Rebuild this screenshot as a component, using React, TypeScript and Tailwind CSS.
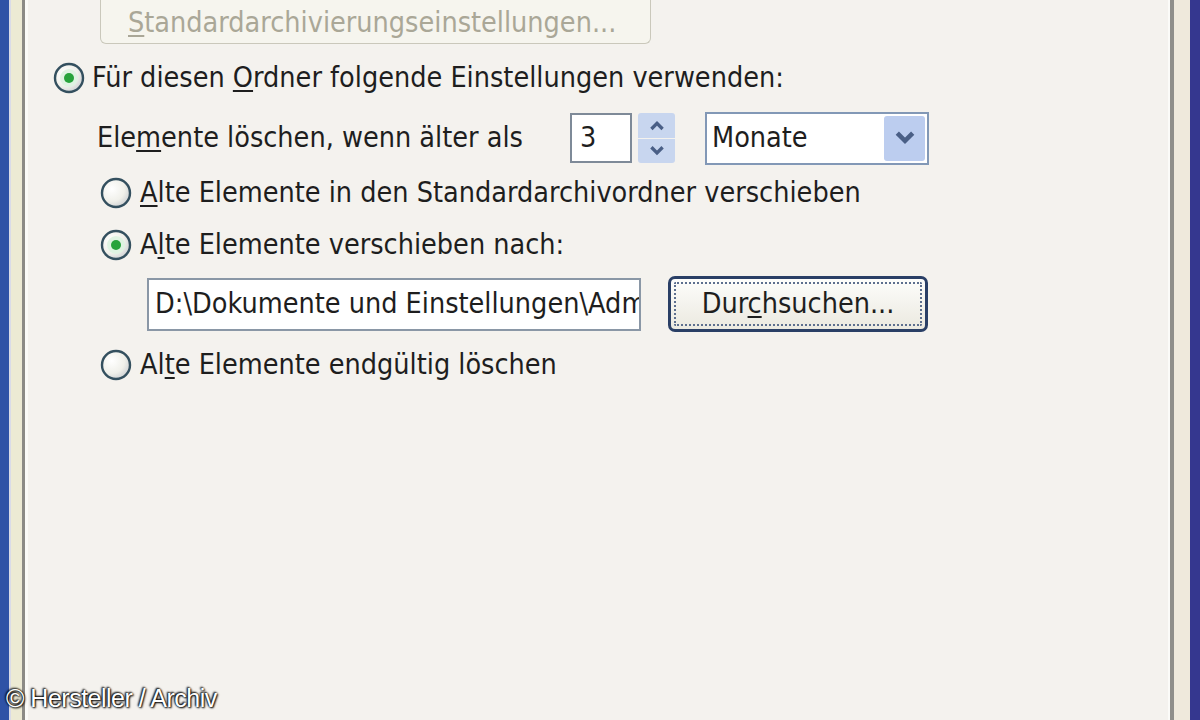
import React from 'react';

const font = "font-['DejaVu_Sans',sans-serif] font-stretch-condensed";

const Radio: React.FC<{ checked?: boolean }> = ({ checked }) => (
  <svg width="32" height="32" viewBox="0 0 32 32" className="shrink-0">
    <defs>
      <radialGradient id={checked ? 'rg1' : 'rg0'} cx="0.35" cy="0.35" r="0.75">
        <stop offset="0" stopColor="#ffffff" />
        <stop offset="0.6" stopColor="#f0f0ea" />
        <stop offset="1" stopColor="#c9ccd0" />
      </radialGradient>
    </defs>
    <circle cx="16" cy="16" r="14" fill={`url(#${checked ? 'rg1' : 'rg0'})`} stroke="#34505f" strokeWidth="2.4" />
    {checked && (
      <>
        <circle cx="16" cy="16" r="9" fill="#dff3e2" />
        <circle cx="16" cy="16" r="5" fill="#27a33b" />
      </>
    )}
  </svg>
);

const Chevron: React.FC<{ up?: boolean; size?: number }> = ({ up, size = 16 }) => (
  <svg width={size} height={size * 0.7} viewBox="0 0 14 10">
    <polyline
      points={up ? '2,8 7,3 12,8' : '2,2 7,7 12,2'}
      fill="none"
      stroke="#4a5f86"
      strokeWidth="3"
      strokeLinejoin="miter"
    />
  </svg>
);

const App: React.FC = () => {
  return (
    <div className={`w-[1200px] h-[720px] flex overflow-hidden bg-[#f4f2ee] text-[#1e1e1e] ${font}`}>
      {/* left window frame */}
      <div className="w-[9px] bg-[#2f52a6]" />
      <div className="w-[2px] bg-[#d9dbe8]" />
      <div className="w-[11px] bg-[#ecead4]" />
      <div className="w-[3px] bg-[#8c8b86]" />
      <div className="w-[3px] bg-[#fbfbf8]" />

      <main className="relative flex-1 flex flex-col pl-[25px] text-[28.5px]">
        {/* disabled button cut at top */}
        <div className="ml-[47px] w-[551px] h-[44px] rounded-b-[6px] border border-t-0 border-[#cac8bb] bg-[#f6f5ee] flex items-end pb-[6px] pl-[27px] leading-none text-[#aaa797]">
          <span><span className="underline underline-offset-[3px]">S</span>tandardarchivierungseinstellungen...</span>
        </div>

        <div className="mt-[17px] h-[34px] flex items-center gap-[7px]">
          <Radio checked />
          <span>Für diesen <span className="underline underline-offset-[3px]">O</span>rdner folgende Einstellungen verwenden:</span>
        </div>

        <div className="mt-[17px] ml-[44px] h-[52px] flex items-center">
          <span className="w-[473px]">Ele<span className="underline underline-offset-[3px]">m</span>ente löschen, wenn älter als</span>
          <div className="w-[62px] h-[50px] border-2 border-[#7e8a98] bg-white flex items-center pl-[8px]">3</div>
          <div className="ml-[6px] w-[37px] h-[50px] flex flex-col gap-[1px]">
            <div className="flex-1 bg-[#c8d6ef] rounded-t-[3px] flex items-center justify-center">
              <Chevron up />
            </div>
            <div className="flex-1 bg-[#c8d6ef] rounded-b-[3px] flex items-center justify-center">
              <Chevron />
            </div>
          </div>
          <div className="ml-[30px] w-[224px] h-[53px] border-2 border-[#8298b6] bg-white flex items-center pl-[5px] pr-[2px]">
            <span className="flex-1">Monate</span>
            <div className="w-[41px] h-[45px] bg-[#bccdef] rounded-[3px] flex items-center justify-center">
              <Chevron size={22} />
            </div>
          </div>
        </div>

        <div className="mt-[12px] ml-[47px] h-[34px] flex items-center gap-[8px]">
          <Radio />
          <span><span className="underline underline-offset-[3px]">A</span>lte Elemente in den Standardarchivordner verschieben</span>
        </div>

        <div className="mt-[18px] ml-[47px] h-[34px] flex items-center gap-[8px]">
          <Radio checked />
          <span>A<span className="underline underline-offset-[3px]">l</span>te Elemente verschieben nach:</span>
        </div>

        <div className="mt-[14px] ml-[94px] flex items-center">
          <div className="w-[494px] h-[53px] border-2 border-[#8a97a6] bg-white flex items-center pl-[6px] overflow-hidden whitespace-nowrap">
            <span className="shrink-0">D:\Dokumente und Einstellungen\Administrator</span>
          </div>
          <div className="ml-[27px] w-[260px] h-[56px] rounded-[7px] border-[3px] border-[#2a3f66] bg-gradient-to-b from-[#fdfdfb] to-[#ebe9e0] p-[3px]">
            <div className="w-full h-full border-2 border-dotted border-[#5d6f8e] rounded-[2px] flex items-center justify-center">
              <span>Dur<span className="underline underline-offset-[3px]">c</span>hsuchen...</span>
            </div>
          </div>
        </div>

        <div className="mt-[16px] ml-[47px] h-[34px] flex items-center gap-[8px]">
          <Radio />
          <span>Al<span className="underline underline-offset-[3px]">t</span>e Elemente endgültig löschen</span>
        </div>

        <div className="absolute left-[-22px] bottom-[9px] font-['Liberation_Sans_Narrow','Liberation_Sans',sans-serif] font-stretch-normal text-[25px] leading-none text-white tracking-[-0.5px] [text-shadow:0_0_2px_#000,1px_1px_2px_#000,-1px_-1px_2px_#000]">
          © Hersteller / Archiv
        </div>
      </main>

      {/* right window frame */}
      <div className="w-[2px] bg-[#fbfbf8]" />
      <div className="w-[4px] bg-[#8f8e8a]" />
      <div className="w-[16px] bg-[#efe9dc]" />
      <div className="w-[10px] bg-[#35378f]" />
    </div>
  );
};

export default App;
